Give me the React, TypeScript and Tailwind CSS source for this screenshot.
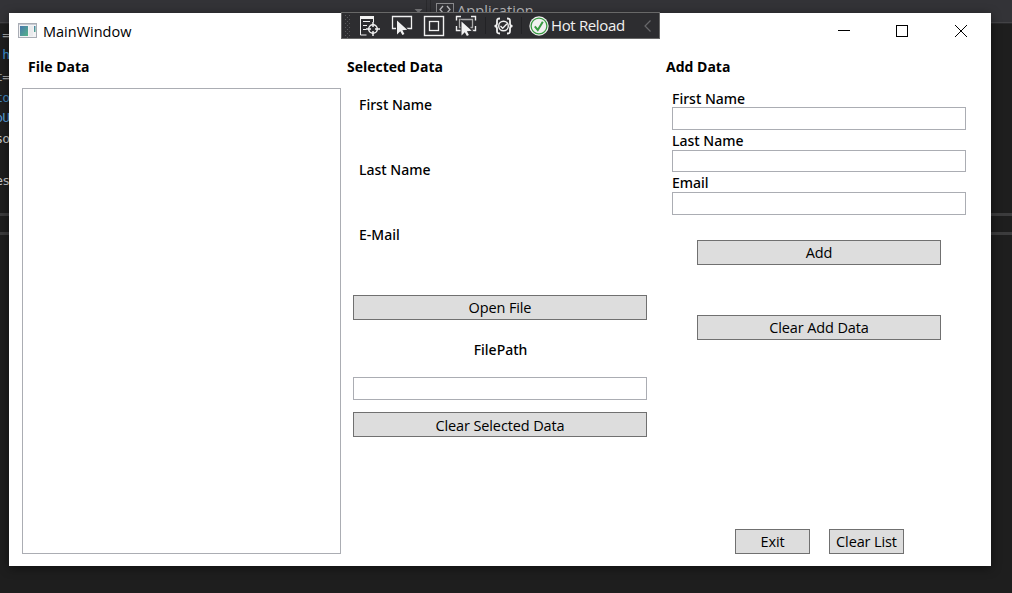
import type { ReactNode } from 'react';

function Label({ className = '', children }: { className?: string; children: ReactNode }) {
  return <div className={`h-5 whitespace-nowrap leading-5 ${className}`}>{children}</div>;
}

function Button({ className = '', children }: { className?: string; children: ReactNode }) {
  return (
    <button className={`flex h-[25px] items-center justify-center whitespace-nowrap border border-[#707070] bg-[#dddddd] leading-5 tracking-[-0.12px] ${className}`}>
      {children}
    </button>
  );
}

function Field({ className = '' }: { className?: string }) {
  return <input className={`block w-[294px] border border-[#abadb3] bg-white outline-none ${className}`} />;
}

function AppIcon() {
  return (
    <svg width="19" height="16" viewBox="0 0 19 16">
      <defs>
        <linearGradient id="tile" x1="0" y1="0" x2="1" y2="1">
          <stop offset="0" stopColor="#4777ae" />
          <stop offset="1" stopColor="#55b488" />
        </linearGradient>
      </defs>
      <rect x="0.5" y="0.5" width="18" height="14" fill="#f2f2f4" stroke="#a9adb5" />
      <path d="M1 1.5h17" stroke="#c8ccd4" />
      <rect x="2" y="3" width="8" height="10" fill="url(#tile)" />
      <rect x="11" y="3" width="4" height="10" fill="#e9eaec" />
      <rect x="16" y="3" width="1.5" height="6" fill="url(#tile)" />
    </svg>
  );
}

const cursor = 'M0 0v14l3.3-3.2 2.1 3.7 2-1.1-2-3.6 4.8-.5z';

function DebugBar() {
  return (
    <div className="absolute left-[341px] top-3 flex h-[27px] w-[319px] items-center border border-[#686868] bg-[#2d2d30] text-[#f1f1f1]">
      <svg className="shrink-0" width="211" height="25" viewBox="342 13 211 25" fill="none" stroke="#f1f1f1">
        <g fill="#58585b" stroke="none">
          {[15, 19, 23, 27, 31, 35].map((y) => (
            <g key={y}>
              <rect x="345" y={y} width="1" height="1" />
              <rect x="349" y={y} width="1" height="1" />
              <rect x="347" y={y + 2} width="1" height="1" />
            </g>
          ))}
        </g>
        <path d="M360.500 16v19h6M373.500 18v4M363 21.500h7M363 25.500h4M363 29.500h3" />
        <path d="M360 17.500h14" strokeWidth="3" />
        <circle cx="373" cy="29" r="4.300" strokeWidth="1.500" />
        <path d="M373 22v5M373 31v5M366 29h5M375 29h5" strokeWidth="1.500" />
        <path d="M397 28.500h-4.500v-12h19v12h-5" strokeWidth="1.300" />
        <path d={cursor} transform="translate(397 20.500)" fill="#f1f1f1" stroke="#2d2d30" strokeWidth="2" paintOrder="stroke" />
        <rect x="424.500" y="16.500" width="19" height="19" strokeWidth="1.400" />
        <rect x="429.500" y="21.500" width="9" height="9" strokeWidth="1.300" />
        <path d="M461 16.500h-4.500v4M471 16.500h4.500v4M456.500 26v4.500h4.500M475.500 26v4.500h-4" strokeWidth="1.400" />
        <path d="M462 27.500h-2.500v-8h13v8h-2" stroke="#aaa" strokeWidth="1.300" />
        <path d={cursor} transform="translate(461.500 21.500)" fill="#f1f1f1" stroke="#2d2d30" strokeWidth="2" paintOrder="stroke" />
        <path d="M485.500 17v17M521.500 17v17" stroke="#222225" />
        <path d="M500 18.500c-3 0-3 1-3 3v2c0 2-1 2.500-2.500 2.500 1.500 0 2.500.5 2.500 2.500v2c0 2 0 3 3 3M507 18.500c3 0 3 1 3 3v2c0 2 1 2.500 2.500 2.500-1.500 0-2.500.5-2.500 2.500v2c0 2 0 3-3 3" strokeWidth="1.800" />
        <circle cx="503.500" cy="26" r="4.800" strokeWidth="1.400" />
        <path d="M500.500 26l2.200 2.200 4.300-4.400" strokeWidth="1.400" />
        <circle cx="539" cy="26" r="9.700" fill="#f1f1f1" stroke="none" />
        <circle cx="539" cy="26" r="7.900" stroke="#389b42" strokeWidth="1.300" />
        <path d="M534.800 26.300l3 3.700 5-8.300" stroke="#389b42" strokeWidth="2" />
      </svg>
      <span className="-ml-[2px] -mt-px w-[82px] whitespace-nowrap text-[15px] leading-5 tracking-[-0.36px]">Hot Reload</span>
      <svg className="ml-2.5" width="10" height="14" viewBox="0 0 10 14" fill="none" stroke="#68686b" strokeWidth="1.200">
        <path d="M7.500 1.500L2 7l5.500 5.500" />
      </svg>
    </div>
  );
}

const codeFragments = [
  { text: '=', top: 'top-[25px]', color: 'text-[#a5a5a5]' },
  { text: 'h', top: 'top-[45px]', color: 'text-[#3f8fd0]' },
  { text: 't=', top: 'top-[67px]', color: 'text-[#a5a5a5]' },
  { text: 'to', top: 'top-[88px]', color: 'text-[#4085bd]' },
  { text: 'oU', top: 'top-[108px]', color: 'text-[#569cd6]' },
  { text: 'so', top: 'top-[129px]', color: 'text-[#c8c8c8]' },
  { text: 'es', top: 'top-[171px]', color: 'text-[#c8c8c8]' },
];

function EditorBackdrop() {
  return (
    <div className="absolute inset-0 overflow-hidden">
      <div className="h-[22px] bg-[#333337]" />
      <div className="h-px bg-[#434346]" />
      <div className="h-px bg-[#29292b]" />
      <div className="mt-[189px] h-[3px] bg-[#3c3c3d]" />
      <div className="mt-4 h-[3px] bg-[#3c3c3d]" />
      {codeFragments.map((c) => (
        <div key={c.top} className={`absolute left-0 flex w-[9px] justify-end font-['DejaVu_Sans_Mono'] text-[13px] leading-5 tracking-[-1px] ${c.top} ${c.color}`}>
          <span>{c.text}</span>
        </div>
      ))}
      <svg className="absolute left-[410px] top-0" width="50" height="14" viewBox="410 0 50 14" fill="none">
        <path d="M414.500 9h8l-4 4z" fill="#77777a" />
        <path d="M426.500 0v14M430.500 0v14" stroke="#29292c" />
        <rect x="436.500" y="3.500" width="17" height="13" stroke="#8a8a8d" />
        <path d="M443 6l-3 3.500 3 3.500M447 6l3 3.500-3 3.500" stroke="#bdbdc0" strokeWidth="1.300" />
      </svg>
      <span className="absolute left-[457px] top-px text-[14.5px] leading-5 tracking-[0.1px] text-[#b8b8ba]">Application</span>
    </div>
  );
}

export default function App() {
  return (
    <div className="relative h-[593px] w-[1012px] overflow-hidden bg-[#1e1e1e] pl-[9px] pt-[13px] font-['Open_Sans',sans-serif] text-[14.5px] text-black">
      <EditorBackdrop />
      <main className="relative h-[553px] w-[982px] bg-white shadow-[0_2px_10px_rgba(0,0,0,0.45)]">
        <header className="flex h-[37px] items-center justify-between pb-px pl-[9px] pr-[23px]">
          <div className="flex items-center gap-1.5">
            <AppIcon />
            <span className="pt-px leading-5">MainWindow</span>
          </div>
          <svg width="130" height="14" viewBox="0 0 130 14" fill="none" stroke="#000">
            <path d="M0 6.500h12" />
            <rect x="58.500" y="1.500" width="11" height="11" />
            <path d="M117 1l12 12M129 1l-12 12" />
          </svg>
        </header>
        <div className="flex pl-[13px]">
          <section className="w-[319px]">
            <Label className="mt-[7px] pl-1.5 text-[14px] font-bold">File Data</Label>
            <div className="mt-[11px] h-[466px] border border-[#abadb3]" />
          </section>
          <section className="w-[319px]">
            <Label className="mt-[7px] pl-1.5 text-[14px] font-bold">Selected Data</Label>
            <Label className="mt-[18px] pl-[18px] font-['Noto_Sans'] text-[14px] font-medium">First Name</Label>
            <Label className="mt-[45px] pl-[18px] font-['Noto_Sans'] text-[14px] font-medium">Last Name</Label>
            <Label className="mt-[45px] pl-[18px] font-['Noto_Sans'] text-[14px] font-medium">E-Mail</Label>
            <Button className="ml-3 mt-[50px] w-[294px]">Open File</Button>
            <Label className="mt-5 text-center font-['Noto_Sans'] text-[14px] font-medium">FilePath</Label>
            <Field className="ml-3 mt-[17px] h-[23px]" />
            <Button className="ml-3 mt-3 w-[294px] pt-0.5">Clear Selected Data</Button>
          </section>
          <section className="w-[319px]">
            <Label className="mt-[7px] pl-1.5 text-[14px] font-bold">Add Data</Label>
            <div className="pl-3 pt-3 font-['Noto_Sans'] text-[14px] font-medium">
              <Label>First Name</Label>
              <Field className="-mt-[2px] h-[23px]" />
              <Label className="pt-px">Last Name</Label>
              <Field className="h-[22px]" />
              <Label className="pt-px">Email</Label>
              <Field className="h-[23px]" />
            </div>
            <Button className="ml-[37px] mt-[25px] w-[244px]">Add</Button>
            <Button className="ml-[37px] mt-[50px] w-[244px]">Clear Add Data</Button>
            <div className="mt-[189px] flex gap-[19px] pl-[75px]">
              <Button className="w-[75px]">Exit</Button>
              <Button className="w-[75px]">Clear List</Button>
            </div>
          </section>
        </div>
      </main>
      <DebugBar />
    </div>
  );
}
